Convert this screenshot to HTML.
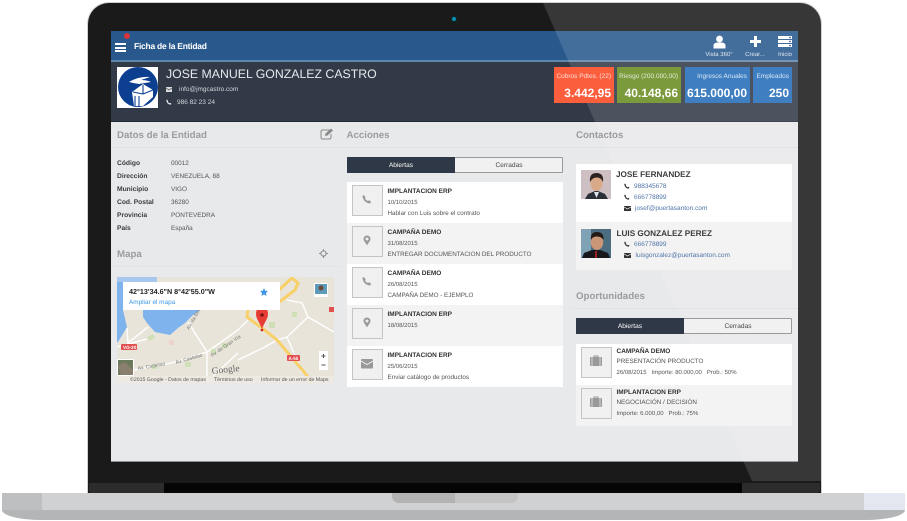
<!DOCTYPE html>
<html><head><meta charset="utf-8"><style>
html,body{margin:0;padding:0;background:#fff}
body{width:907px;height:521px;position:relative;overflow:hidden;font-family:"Liberation Sans",sans-serif;text-rendering:geometricPrecision;filter:blur(.3px)}
.a,.t{position:absolute}
.t{white-space:nowrap;line-height:10px;height:10px;margin-top:1px}
.h{font-size:9.7px;font-weight:bold;color:#9b9c9e}
.l{font-size:6.7px;font-weight:bold;color:#3c3c3c;left:117px;margin-top:2px}
.v{font-size:6.4px;color:#555;left:171px;margin-top:2px}
.sep{position:absolute;height:1px;background:#e2e3e5}
.tit{font-size:6.5px;font-weight:bold;color:#333;margin-top:2px}
.sm{font-size:6px;color:#555;margin-top:2px}
.d{font-size:6.3px;color:#555;margin-top:2px}
.box{position:absolute;width:29px;height:29px;background:#f0f0f0;border:1px solid #c4c4c4;box-sizing:content-box}
.lk{font-size:6.5px;color:#4f74a8;margin-top:2px}
.kl{font-size:6.5px;color:#fff;opacity:.8;text-align:right}
.kv{font-size:12px;font-weight:bold;color:#fff;text-align:right;line-height:14px;height:14px}
.wl{font-size:6px;color:#dfe6ee;text-align:center}
</style></head><body>

<!-- lid -->
<div class="a" style="left:87px;top:2px;width:735px;height:492px;background:#1a1a1a;border:1px solid #cfd0d2;border-bottom:0;border-radius:22px 22px 0 0;box-sizing:border-box"></div>
<div class="a" style="left:89px;top:483px;width:731px;height:10px;background:#2c2c2c;border-radius:0 0 3px 3px"></div>
<div class="a" style="left:164px;top:483px;width:578px;height:10px;background:#050505"></div>
<div class="a" style="left:451px;top:16px;width:6px;height:6px;border-radius:50%;background:#0d8fb0;border:1px solid #0a2a33;box-sizing:border-box"></div>

<!-- screen -->
<div class="a" style="left:111px;top:31px;width:687px;height:430px;background:#e8e9eb;border-bottom:1px solid #8d8f91;box-sizing:content-box;overflow:hidden">
  <div class="a" style="left:0;top:0;width:687px;height:29px;background:#28588c"></div>
  <div class="a" style="left:0;top:29px;width:687px;height:2px;background:#5f86ad"></div>
  <div class="a" style="left:0;top:31px;width:687px;height:59px;background:#323a48;border-bottom:1px solid #232936"></div>
</div>

<!-- glare -->
<svg class="a" style="left:0;top:0;pointer-events:none" width="907" height="521">
<path d="M543 3H804Q821 3 821 20V481H752Z" fill="#fff" opacity=".13"/>
</svg>

<!-- topbar -->
<div class="a" style="left:115px;top:43px;width:11px;height:2px;background:#fff"></div>
<div class="a" style="left:115px;top:46.500px;width:11px;height:2px;background:#fff"></div>
<div class="a" style="left:115px;top:50px;width:11px;height:2px;background:#fff"></div>
<div class="a" style="left:124px;top:33px;width:6px;height:6px;border-radius:50%;background:#d8343a"></div>
<div class="t" style="left:134px;top:40px;font-size:8.5px;font-weight:bold;color:#fff;letter-spacing:-.25px">Ficha de la Entidad</div>

<svg class="a" style="left:712px;top:35px" width="15" height="14" viewBox="0 0 15 14"><circle cx="7.5" cy="4" r="3.4" fill="#fff"/><path d="M1.5 13.5V10.5Q1.5 8 5 7.5H10Q13.5 8 13.5 10.5V13.5Z" fill="#fff"/></svg>
<div class="t wl" style="left:699px;top:49px;width:40px">Vista 360°</div>
<svg class="a" style="left:750px;top:36px" width="11" height="11"><path d="M4 0h3v4h4v3H7v4H4V7H0V4h4z" fill="#fff"/></svg>
<div class="t wl" style="left:735px;top:49px;width:40px">Crear...</div>
<svg class="a" style="left:778px;top:36px" width="14" height="11"><rect width="14" height="3" y="0" fill="#fff"/><rect width="14" height="3" y="4" fill="#fff"/><rect width="14" height="3" y="8" fill="#fff"/><rect x="11" y=".8" width="2" height="1.4" fill="#5d7ea3"/><rect x="11" y="4.8" width="2" height="1.4" fill="#5d7ea3"/><rect x="11" y="8.8" width="2" height="1.4" fill="#5d7ea3"/></svg>
<div class="t wl" style="left:765px;top:49px;width:40px">Inicio</div>

<!-- header -->
<div class="a" style="left:117px;top:67px;width:41px;height:41px;background:#fff;overflow:hidden">
<svg width="41" height="41" viewBox="0 0 41 41"><circle cx="21" cy="20" r="20" fill="#0d3f91"/><path d="M12 15Q22 9 33 10L24 13Q30 13 34 15L22 17Q16 16 12 15Z" fill="#fff"/><path d="M15 25L26 17L36 23V30L26 39H17Z" fill="#fff"/><path d="M26 18V27M26 27L36 23M26 27L16 25M22 29V40M18 29V40" stroke="#0d3f91" stroke-width="1.1" fill="none"/></svg></div>
<div class="t" style="left:166px;top:68px;font-size:12.3px;line-height:11px;color:#e6e8eb;height:11px">JOSE MANUEL GONZALEZ CASTRO</div>
<svg class="a" style="left:166px;top:87px" width="6" height="5"><rect width="6" height="5" fill="#dcdcdc"/><path d="M0 1l3 2 3-2" stroke="#323a48" stroke-width=".7" fill="none"/></svg>
<div class="t" style="left:179px;top:84px;font-size:6.5px;color:#d2d5da">info@jmgcastro.com</div>
<svg class="a" style="left:166px;top:99px" width="6" height="6" viewBox="0 0 6 6"><path d="M1 .5L2.2 2 1.8 2.8Q2.6 4 3.6 4.2L4.2 3.7 5.6 4.9Q5 5.8 4 5.6 1 5 .3 1.6 .3 .9 1 .5Z" fill="#e6e6e6"/></svg>
<div class="t" style="left:177px;top:97px;font-size:6.5px;color:#d2d5da">986 82 23 24</div>

<!-- KPIs -->
<div class="a" style="left:554px;top:67px;width:60px;height:36px;background:#fb5e3d"></div>
<div class="t kl" style="left:554px;top:71px;width:57px">Cobros Pdtes. (22)</div>
<div class="t kv" style="left:554px;top:85px;width:57px">3.442,95</div>
<div class="a" style="left:617px;top:67px;width:64px;height:36px;background:#7a9a3c"></div>
<div class="t kl" style="left:617px;top:71px;width:61px">Riesgo (200.000,00)</div>
<div class="t kv" style="left:617px;top:85px;width:61px">40.148,66</div>
<div class="a" style="left:685px;top:67px;width:65px;height:36px;background:#3f7fc1"></div>
<div class="t kl" style="left:685px;top:71px;width:62px">Ingresos Anuales</div>
<div class="t kv" style="left:685px;top:85px;width:62px">615.000,00</div>
<div class="a" style="left:753px;top:67px;width:39px;height:36px;background:#3f7fc1"></div>
<div class="t kl" style="left:753px;top:71px;width:36px">Empleados</div>
<div class="t kv" style="left:753px;top:85px;width:36px">250</div>

<!-- Left col -->
<div class="t h" style="left:117px;top:130px">Datos de la Entidad</div>
<svg class="a" style="left:320px;top:128px" width="14" height="12" viewBox="0 0 14 12"><path d="M10 2H2.5Q1 2 1 3.5V9.5Q1 11 2.5 11H9.5Q11 11 11 9.5V6" fill="none" stroke="#8a8a8a" stroke-width="1"/><path d="M5 8L5.5 5.5 11 0.5 13 2.5 7.5 7.5Z" fill="#8a8a8a"/></svg>
<div class="sep" style="left:111px;top:147px;width:229px"></div>
<div class="t l" style="top:157px">Código</div><div class="t v" style="top:157px">00012</div>
<div class="t l" style="top:170px">Dirección</div><div class="t v" style="top:170px">VENEZUELA, 88</div>
<div class="t l" style="top:183px">Municipio</div><div class="t v" style="top:183px">VIGO</div>
<div class="t l" style="top:196px">Cod. Postal</div><div class="t v" style="top:196px">36280</div>
<div class="t l" style="top:209px">Provincia</div><div class="t v" style="top:209px">PONTEVEDRA</div>
<div class="t l" style="top:222px">País</div><div class="t v" style="top:222px">España</div>
<div class="t h" style="left:117px;top:249px">Mapa</div>
<svg class="a" style="left:319px;top:249px" width="9" height="9" viewBox="0 0 9 9"><circle cx="4.5" cy="4.5" r="2.6" fill="none" stroke="#8f8f8f" stroke-width="1.1"/><path d="M4.5 0v2M4.5 7v2M0 4.5h2M7 4.5h2" stroke="#8f8f8f"/></svg>
<div class="sep" style="left:111px;top:266px;width:229px"></div>

<!-- Map -->
<svg class="a" style="left:117px;top:277px" width="217" height="106" viewBox="0 0 217 106">
<rect width="217" height="106" fill="#e8e4da"/>
<path d="M0 0H6V33L10 50 1 65H0Z" fill="#7fb3ee"/>
<path d="M0 0H40V5H0Z" fill="#a8c7ef"/>
<path d="M26 33H83L76 38 68 46 61 51 53 58 38 55 30 46 26 40Z" fill="#7fb3ee"/>
<path d="M71 45L90 75V106M90 75L121 53 131 43M1 96L55 86 90 75M121 83L148 70 160 63M160 63L170 60 191 40 185 26 170 23M10 51L11 66 31 50M121 76L95 100M191 40L217 55M170 60L185 95M0 70L30 62" stroke="#fff" stroke-width="1.4" fill="none"/>
<path d="M131 33L130 40 145 51 160 63 188 96 195 106M162 13L175 1 181 6 178 13 165 23 155 30 145 33" stroke="#f8d068" stroke-width="3" fill="none"/>
<path d="M94 72h5v5h-5zM35 88h5v4h-5zM68 85h6v5h-6zM105 66h6v5h-6zM152 45h6v6h-6zM175 35h5v5h-5zM30 60l6-3 2 4-6 3z" fill="#cfe0b6"/>
<path d="M52 63h5v5h-5z" fill="#eed3cd"/>
<rect x="4" y="67" width="16" height="6" rx="1" fill="#e05050"/>
<text x="6" y="72" font-family="Liberation Sans" font-size="4.6" font-weight="bold" fill="#fff">VG-20</text>
<rect x="170" y="78" width="13" height="6" rx="1" fill="#e05050"/>
<text x="171.500" y="83" font-family="Liberation Sans" font-size="4.5" font-weight="bold" fill="#fff">A-55</text>
<rect x="212" y="30" width="5" height="5" fill="#e05050"/>
<text x="21" y="93" font-family="Liberation Sans" font-size="5" fill="#777" transform="rotate(-10 21 93)">Av. Castelao</text>
<text x="59" y="87" font-family="Liberation Sans" font-size="5" fill="#777" transform="rotate(-16 59 87)">Av. Castelao</text>
<text x="95" y="80" font-family="Liberation Sans" font-size="5" fill="#777" transform="rotate(-34 95 80)">Av. de Gran Vía</text>
<text x="72" y="53" font-family="Liberation Sans" font-size="5" fill="#777" transform="rotate(-60 72 53)">Av. da Beiramar</text>
<text x="95" y="97" font-family="Liberation Serif" font-size="9.5" fill="#666" transform="rotate(-6 95 97)">Google</text>
<path d="M145 29C149 29 151 33 151 37 151 42 147 46 145 52 143 46 139 42 139 37 139 33 141 29 145 29Z" fill="#e83d35"/>
<circle cx="145" cy="38" r="1.8" fill="#7a1510"/><circle cx="145" cy="53" r="1.3" fill="#c81e1e"/>
<rect x="6" y="5" width="157" height="28" fill="#fff"/>
<rect x="197" y="6" width="14" height="14" fill="#fff"/>
<rect x="198" y="7" width="12" height="10" fill="#5d99b8"/><circle cx="204" cy="11" r="2.5" fill="#6a4a38"/>
<rect x="202" y="74" width="9" height="19" fill="#fff"/>
<path d="M204.500 79h4M206.500 77v4M204.500 88h4" stroke="#555" stroke-width="1"/>
<rect x="0" y="82" width="17" height="17" fill="#fff"/>
<rect x="1" y="83" width="15" height="15" fill="#6c7a5c"/><path d="M1 89L8 85 16 93 16 98H4Z" fill="#8a7f6e"/>
<rect x="0" y="99" width="217" height="7" fill="#eeebe4" opacity=".85"/>
<text x="12" y="17" font-family="Liberation Sans" font-size="7.2" font-weight="bold" fill="#222">42°13'34.6"N 8°42'55.0"W</text>
<text x="12" y="27" font-family="Liberation Sans" font-size="6.4" fill="#3d96e6">Ampliar el mapa</text>
<path d="M147 11L148.200 13.800 151 14 148.900 16 149.500 19 147 17.400 144.500 19 145.100 16 143 14 145.800 13.800Z" fill="#3d96e6"/>
<text x="13" y="104" font-family="Liberation Sans" font-size="5.2" fill="#555">©2015 Google - Datos de mapas</text>
<text x="97" y="104" font-family="Liberation Sans" font-size="5.2" fill="#555">Términos de uso</text>
<text x="144" y="104" font-family="Liberation Sans" font-size="5.2" fill="#555">Informar de un error de Maps</text>
</svg>

<!-- Acciones -->
<div class="t h" style="left:346.500px;top:130px">Acciones</div>
<div class="sep" style="left:340px;top:147px;width:230px"></div>
<div class="a" style="left:347px;top:157px;width:216px;height:16px;background:#f1f1f1;border:1px solid #9a9a9a;box-sizing:border-box;border-radius:1px"></div>
<div class="a" style="left:347px;top:157px;width:108px;height:16px;background:#2f3846"></div>
<div class="t" style="left:347px;top:160px;width:108px;text-align:center;font-size:6.6px;color:#fff">Abiertas</div>
<div class="t" style="left:455px;top:160px;width:108px;text-align:center;font-size:6.6px;color:#444">Cerradas</div>

<div class="a" style="left:347px;top:182px;width:216px;height:41px;background:#fff"></div>
<div class="a" style="left:347px;top:223px;width:216px;height:41px;background:#f3f3f3"></div>
<div class="a" style="left:347px;top:264px;width:216px;height:41px;background:#fff"></div>
<div class="a" style="left:347px;top:305px;width:216px;height:41px;background:#f3f3f3"></div>
<div class="a" style="left:347px;top:346px;width:216px;height:41px;background:#fff"></div>

<div class="box" style="left:352px;top:185px"></div>
<svg class="a" style="left:362px;top:194px" width="10" height="10" viewBox="0 0 6 6"><path d="M1 .5L2.2 2 1.8 2.8Q2.6 4 3.6 4.2L4.2 3.7 5.6 4.9Q5 5.8 4 5.6 1 5 .3 1.6 .3 .9 1 .5Z" fill="#999"/></svg>
<div class="t tit" style="left:387.500px;top:184.500px">IMPLANTACION ERP</div>
<div class="t sm" style="left:387.500px;top:196px">10/10/2015</div>
<div class="t d" style="left:387.500px;top:207px">Hablar con Luis sobre el contrato</div>

<div class="box" style="left:352px;top:226px"></div>
<svg class="a" style="left:363px;top:235px" width="8" height="11" viewBox="0 0 8 11"><path d="M4 0.5A3.5 3.5 0 0 1 7.5 4C7.5 6 5 8 4 10.5 3 8 .5 6 .5 4A3.5 3.5 0 0 1 4 .5Z" fill="#999"/><circle cx="4" cy="4" r="1.5" fill="#f0f0f0"/></svg>
<div class="t tit" style="left:387.500px;top:225.500px">CAMPAÑA DEMO</div>
<div class="t sm" style="left:387.500px;top:237px">31/08/2015</div>
<div class="t d" style="left:387.500px;top:248px">ENTREGAR DOCUMENTACION DEL PRODUCTO</div>

<div class="box" style="left:352px;top:267px"></div>
<svg class="a" style="left:362px;top:276px" width="10" height="10" viewBox="0 0 6 6"><path d="M1 .5L2.2 2 1.8 2.8Q2.6 4 3.6 4.2L4.2 3.7 5.6 4.9Q5 5.8 4 5.6 1 5 .3 1.6 .3 .9 1 .5Z" fill="#999"/></svg>
<div class="t tit" style="left:387.500px;top:266.500px">CAMPAÑA DEMO</div>
<div class="t sm" style="left:387.500px;top:278px">26/08/2015</div>
<div class="t d" style="left:387.500px;top:289px">CAMPAÑA DEMO - EJEMPLO</div>

<div class="box" style="left:352px;top:308px"></div>
<svg class="a" style="left:363px;top:317px" width="8" height="11" viewBox="0 0 8 11"><path d="M4 0.5A3.5 3.5 0 0 1 7.5 4C7.5 6 5 8 4 10.5 3 8 .5 6 .5 4A3.5 3.5 0 0 1 4 .5Z" fill="#999"/><circle cx="4" cy="4" r="1.5" fill="#f0f0f0"/></svg>
<div class="t tit" style="left:387.500px;top:307.500px">IMPLANTACION ERP</div>
<div class="t sm" style="left:387.500px;top:319px">18/08/2015</div>

<div class="box" style="left:352px;top:349px"></div>
<svg class="a" style="left:361px;top:359px" width="12" height="10" viewBox="0 0 12 10"><rect width="12" height="9.5" rx="1" fill="#999"/><path d="M0 2l6 3.5L12 2" stroke="#f0f0f0" stroke-width="1" fill="none"/></svg>
<div class="t tit" style="left:387.500px;top:348.500px">IMPLANTACION ERP</div>
<div class="t sm" style="left:387.500px;top:360px">25/06/2015</div>
<div class="t d" style="left:387.500px;top:371px">Enviar catálogo de productos</div>

<!-- Contactos -->
<div class="t h" style="left:576px;top:130px">Contactos</div>
<div class="sep" style="left:570px;top:147px;width:228px"></div>
<div class="a" style="left:576px;top:164px;width:216px;height:58px;background:#fff"></div>
<div class="a" style="left:576px;top:222px;width:216px;height:48px;background:#f3f3f3"></div>

<svg class="a" style="left:581px;top:170px" width="30" height="29" viewBox="0 0 30 29"><rect width="30" height="29" fill="#cdbfc2"/><path d="M4 29L7 24 14 21H17L24 24 27 29Z" fill="#2b2f38"/><path d="M13 22L15.5 28 18 22Z" fill="#dfe6ee"/><ellipse cx="15.5" cy="13" rx="6" ry="8" fill="#d9a988"/><path d="M9 12Q8 3 15.5 3 23 3 22 12 20 7 15 7.5 11 8 9 12Z" fill="#2c2320"/></svg>
<div class="t" style="left:616px;top:168.500px;font-size:8.2px;font-weight:bold;color:#3c3c3c">JOSE FERNANDEZ</div>
<svg class="a p" style="left:624px;top:183px" width="6" height="6" viewBox="0 0 6 6"><path d="M1 .5L2.2 2 1.8 2.8Q2.6 4 3.6 4.2L4.2 3.7 5.6 4.9Q5 5.8 4 5.6 1 5 .3 1.6 .3 .9 1 .5Z" fill="#333"/></svg>
<div class="t lk" style="left:634px;top:180px">988345678</div>
<svg class="a" style="left:624px;top:194px" width="6" height="6" viewBox="0 0 6 6"><path d="M1 .5L2.2 2 1.8 2.8Q2.6 4 3.6 4.2L4.2 3.7 5.6 4.9Q5 5.8 4 5.6 1 5 .3 1.6 .3 .9 1 .5Z" fill="#333"/></svg>
<div class="t lk" style="left:634px;top:191px">666778899</div>
<svg class="a" style="left:624px;top:206px" width="7" height="5"><rect width="7" height="5" rx=".5" fill="#333"/><path d="M0 1l3.5 2L7 1" stroke="#fff" stroke-width=".6" fill="none"/></svg>
<div class="t lk" style="left:635px;top:202px">josef@puertasanton.com</div>

<svg class="a" style="left:581px;top:229px" width="30" height="29" viewBox="0 0 30 29"><rect width="30" height="29" fill="#4a6d80"/><path d="M0 0H10V29H0Z" fill="#7fa3b5"/><path d="M1 29L3 24 11 21H19L27 24 29 29Z" fill="#17181c"/><path d="M15 22V29" stroke="#9d2020" stroke-width="2"/><ellipse cx="16" cy="13" rx="6.3" ry="8" fill="#c99777"/><path d="M10 11Q9 3 16 3 23 3 22.5 11 20 7 15 7.5 11 8 10 11Z" fill="#241a15"/></svg>
<div class="t" style="left:616.500px;top:227.500px;font-size:8.2px;font-weight:bold;color:#3c3c3c">LUIS GONZALEZ PEREZ</div>
<svg class="a" style="left:624px;top:241px" width="6" height="6" viewBox="0 0 6 6"><path d="M1 .5L2.2 2 1.8 2.8Q2.6 4 3.6 4.2L4.2 3.7 5.6 4.9Q5 5.8 4 5.6 1 5 .3 1.6 .3 .9 1 .5Z" fill="#333"/></svg>
<div class="t lk" style="left:634px;top:238px">666778899</div>
<svg class="a" style="left:624px;top:253px" width="7" height="5"><rect width="7" height="5" rx=".5" fill="#333"/><path d="M0 1l3.5 2L7 1" stroke="#fff" stroke-width=".6" fill="none"/></svg>
<div class="t lk" style="left:635.500px;top:249px">luisgonzalez@puertasanton.com</div>

<!-- Oportunidades -->
<div class="t h" style="left:576px;top:290.500px">Oportunidades</div>
<div class="sep" style="left:570px;top:308px;width:228px"></div>
<div class="a" style="left:576px;top:318px;width:216px;height:16px;background:#f1f1f1;border:1px solid #9a9a9a;box-sizing:border-box;border-radius:1px"></div>
<div class="a" style="left:576px;top:318px;width:108px;height:16px;background:#2f3846"></div>
<div class="t" style="left:576px;top:321px;width:108px;text-align:center;font-size:6.6px;color:#fff">Abiertas</div>
<div class="t" style="left:684px;top:321px;width:108px;text-align:center;font-size:6.6px;color:#444">Cerradas</div>
<div class="a" style="left:576px;top:344px;width:216px;height:41px;background:#fff"></div>
<div class="a" style="left:576px;top:385px;width:216px;height:41px;background:#f3f3f3"></div>

<div class="box" style="left:581px;top:347px"></div>
<svg class="a" style="left:590px;top:355px" width="12" height="11" viewBox="0 0 12 11"><path d="M4 2V1H8V2" fill="none" stroke="#999"/><rect y="2" width="12" height="9" rx="1" fill="#999"/><path d="M2 2v9M10 2v9" stroke="#f0f0f0" stroke-width=".7"/></svg>
<div class="t tit" style="left:616.500px;top:344.500px">CAMPAÑA DEMO</div>
<div class="t d" style="left:616.500px;top:355px">PRESENTACIÓN PRODUCTO</div>
<div class="t" style="left:616.500px;top:367px;font-size:6px;color:#555">26/08/2015 &nbsp; Importe: 80.000,00 &nbsp; Prob.: 50%</div>

<div class="box" style="left:581px;top:388px"></div>
<svg class="a" style="left:590px;top:396px" width="12" height="11" viewBox="0 0 12 11"><path d="M4 2V1H8V2" fill="none" stroke="#999"/><rect y="2" width="12" height="9" rx="1" fill="#999"/><path d="M2 2v9M10 2v9" stroke="#f0f0f0" stroke-width=".7"/></svg>
<div class="t tit" style="left:616.500px;top:385.500px">IMPLANTACION ERP</div>
<div class="t d" style="left:616.500px;top:396px">NEGOCIACIÓN / DECISIÓN</div>
<div class="t" style="left:616.500px;top:408px;font-size:6px;color:#555">Importe: 6.000,00 &nbsp; Prob.: 75%</div>

<!-- base -->
<div class="a" style="left:2px;top:493px;width:903px;height:27px;background:#b4b5b7;border-radius:1px 1px 40px 40px/1px 1px 10px 10px;overflow:hidden">
  <div class="a" style="left:0;top:0;width:903px;height:17px;background:#d0d1d3"></div>
  <div class="a" style="left:0;top:0;width:40px;height:17px;background:#bebfc1"></div>
  <div class="a" style="left:862px;top:0;width:41px;height:17px;background:#e4e7ef"></div>
  <div class="a" style="left:390px;top:0;width:63px;height:10px;background:#b3b3b3;border-radius:0 0 0 7px"></div>
  <div class="a" style="left:453px;top:0;width:63px;height:10px;background:#c4c4c4;border-radius:0 0 7px 0"></div>
</div>
</body></html>
